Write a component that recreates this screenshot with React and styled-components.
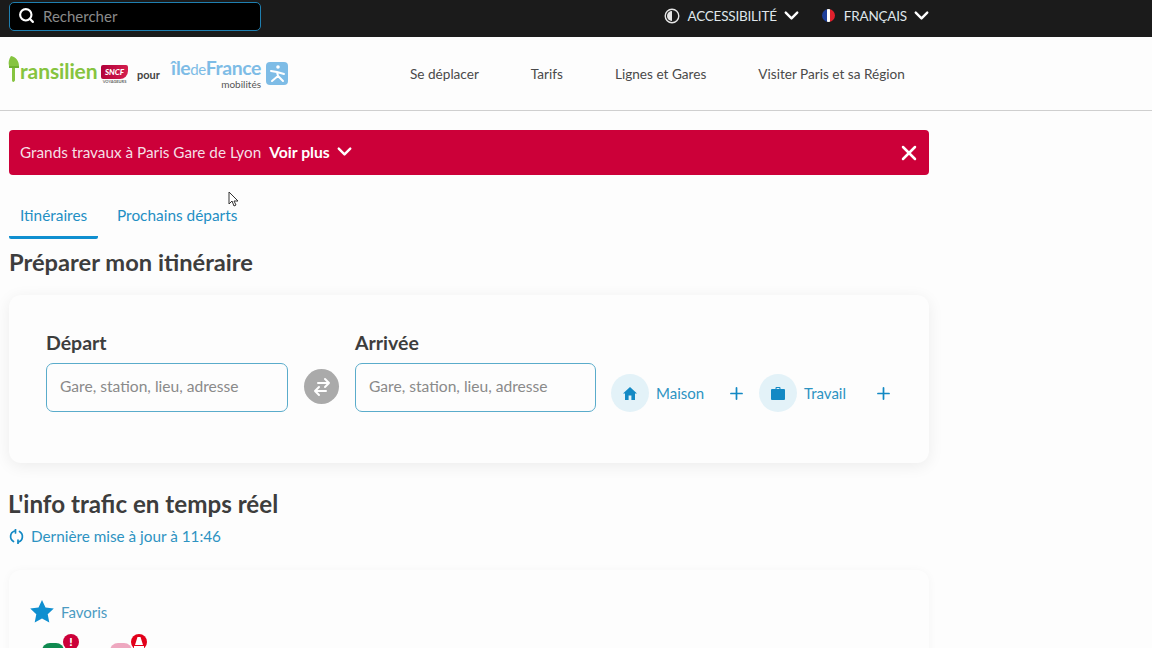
import styled, { createGlobalStyle } from "styled-components";
import { ChevronDown, X, Plus, Search, RefreshCw } from "lucide-react";

const Global = createGlobalStyle`
  html, body {
    margin: 0;
    height: 648px;
    overflow: hidden;
    background: #fdfdfd;
    font-family: Lato, "Open Sans", sans-serif;
  }
  * { box-sizing: border-box; }
`;

const Page = styled.div`
  position: relative;
  width: 1152px;
  height: 648px;
  overflow: hidden;
`;

const TopBar = styled.div`
  height: 37px;
  background: #1b1b1b;
  display: flex;
  align-items: flex-start;
  justify-content: space-between;
  padding: 2px 219px 0 9px;
`;

const SearchBox = styled.div`
  width: 252px;
  height: 29px;
  background: #000;
  border: 1px solid #1f7fb0;
  border-radius: 5px;
  display: flex;
  align-items: center;
  gap: 8px;
  padding: 0 0 2px 8px;
  color: #fff;
`;

const SearchText = styled.span`
  font-size: 15px;
  color: #8a8a8a;
`;

const TopMenu = styled.div`
  display: flex;
  align-items: center;
  height: 27px;
  gap: 19px;
`;

const TopItem = styled.div`
  display: flex;
  align-items: center;
  gap: 7px;
  color: #dfe6ea;
  font-size: 13.5px;
  letter-spacing: -0.2px;
`;

const TopChevron = styled.span`
  display: flex;
  margin-left: -4px;
  color: #fff;
`;

const Flag = styled.span`
  width: 13px;
  height: 13px;
  border-radius: 50%;
  margin-right: 2px;
  background: linear-gradient(90deg, #1d3f9a 0 35%, #fff 35% 65%, #e0202c 65%);
`;

const Header = styled.header`
  height: 74px;
  border-bottom: 1px solid #cfcfcf;
  display: flex;
  align-items: center;
  padding-left: 8px;
`;

const Logos = styled.div`
  width: 402px;
  flex: none;
  display: flex;
  align-items: center;
  height: 40px;
`;

const TransilienLogo = styled.div`
  width: 81px;
  color: #86c440;
  font-size: 21px;
  font-weight: 700;
  letter-spacing: -0.1px;
  margin-top: -6px;
`;

const SncfColumn = styled.div`
  width: 27px;
  display: flex;
  flex-direction: column;
  align-items: center;
  margin-top: 1px;
`;

const SncfMark = styled.div`
  width: 27px;
  height: 14px;
  background: linear-gradient(100deg, #b0003a, #d6204f);
  border-radius: 2px 2px 8px 2px;
  color: #fff;
  font-size: 8px;
  font-weight: 900;
  font-style: italic;
  text-align: center;
  line-height: 14px;
`;

const SncfSub = styled.div`
  font-size: 4px;
  color: #666;
  font-weight: 700;
  line-height: 5px;
`;

const Pour = styled.span`
  margin-left: 9px;
  width: 34px;
  font-size: 11px;
  font-weight: 700;
  color: #444;
  margin-top: 2px;
`;

const IdfColumn = styled.div`
  display: flex;
  flex-direction: column;
  align-items: flex-end;
  width: 90px;
`;

const IdfName = styled.div`
  font-size: 19.4px;
  font-weight: 700;
  color: #7ebce6;
  letter-spacing: -0.4px;
  line-height: 18px;
  white-space: nowrap;
`;

const IdfDe = styled.span`
  font-weight: 400;
  font-size: 15px;
`;

const IdfSub = styled.div`
  font-size: 10px;
  color: #555;
  line-height: 10px;
  margin-top: 1px;
`;

const IdfBadge = styled.div`
  width: 22px;
  height: 23px;
  margin-left: 5px;
  background: #7ebce6;
  border-radius: 4px;
  display: flex;
  align-items: center;
  justify-content: center;
`;

const Nav = styled.nav`
  display: flex;
  gap: 52px;
  font-size: 13.6px;
  color: #4a4a4a;
`;

const Main = styled.main`
  width: 929px;
  padding: 19px 0 0 9px;
`;

const Alert = styled.div`
  height: 45px;
  background: #cc0039;
  border-radius: 4px;
  display: flex;
  align-items: center;
  padding: 0 8px 2px 11px;
  color: #fff;
  font-size: 15.3px;
`;

const AlertText = styled.span`
  color: #f5dfe5;
`;

const AlertMore = styled.b`
  margin-left: 8px;
  font-size: 15.7px;
  font-weight: 700;
`;

const AlertChevron = styled.span`
  display: flex;
  margin-left: 3px;
`;

const AlertClose = styled.span`
  display: flex;
  margin: 2px 0 0 auto;
`;

const Tabs = styled.div`
  display: flex;
  margin-top: 26px;
  height: 38px;
`;

const Tab = styled.div`
  width: ${(p) => p.$width}px;
  padding-left: ${(p) => p.$pad}px;
  font-size: 15.4px;
  color: #1f8fc4;
  line-height: 29px;
  height: 38px;
  border-bottom: ${(p) => (p.$active ? "3px solid #0f8fd0" : "none")};
  border-radius: 0 0 2px 2px;
`;

const Title = styled.h2`
  margin: 9px 0 0;
  font-size: 23.7px;
  font-weight: 700;
  color: #3d3d3d;
  line-height: 28px;
`;

const PlanCard = styled.section`
  margin-top: 19px;
  height: 168px;
  background: #fdfdfd;
  border-radius: 12px;
  box-shadow: 0 3px 16px rgba(0, 0, 0, 0.07);
  display: flex;
  align-items: flex-start;
  padding: 36px 0 0 37px;
`;

const Field = styled.div`
  width: ${(p) => p.$width}px;
`;

const Label = styled.div`
  font-size: 19.5px;
  font-weight: 700;
  color: #3d3d3d;
  line-height: 24px;
  margin-bottom: 8px;
`;

const InputBox = styled.div`
  height: 49px;
  border: 1px solid #5aaccb;
  border-radius: 7px;
  padding: 0 0 3px 13px;
  display: flex;
  align-items: center;
  font-size: 15.6px;
  color: #8a8a8a;
`;

const SwapButton = styled.div`
  width: 35px;
  height: 35px;
  margin: 38px 16px 0 16px;
  border-radius: 50%;
  background: #aaa;
  display: flex;
  align-items: center;
  justify-content: center;
`;

const Shortcuts = styled.div`
  display: flex;
  align-items: center;
  margin: 43px 0 0 15px;
`;

const ShortcutIcon = styled.div`
  width: 38px;
  height: 38px;
  border-radius: 50%;
  background: #e3f2f8;
  display: flex;
  align-items: center;
  justify-content: center;
`;

const ShortcutLabel = styled.span`
  width: ${(p) => p.$width}px;
  padding-left: 7px;
  font-size: 15px;
  color: #2d93c2;
`;

const ShortcutPlus = styled.span`
  display: flex;
  width: ${(p) => p.$width}px;
  color: #1389c4;
`;

const TrafficTitle = styled(Title)`
  margin: 27px 0 0 -1px;
  font-size: 24.2px;
`;

const Updated = styled.div`
  display: flex;
  align-items: center;
  gap: 7px;
  margin-top: 8px;
  font-size: 15.3px;
  color: #2d93c2;
  line-height: 20px;
`;

const FavCard = styled.section`
  margin-top: 24px;
  height: 200px;
  border-radius: 12px;
  box-shadow: 0 1px 10px rgba(0, 0, 0, 0.04);
  padding: 30px 0 0 21px;
`;

const FavHead = styled.div`
  display: flex;
  align-items: center;
  gap: 7px;
  font-size: 15px;
  color: #4b9bc2;
`;

const Lines = styled.div`
  display: flex;
  gap: 46px;
  margin: 20px 0 0 12px;
`;

const LineBadge = styled.div`
  position: relative;
  width: 22px;
  height: 22px;
  border-radius: 8px;
  background: ${(p) => p.$color};
`;

const AlertDot = styled.span`
  position: absolute;
  top: -9px;
  left: 21px;
  width: 16px;
  height: 16px;
  border-radius: 50%;
  background: ${(p) => p.$color};
  color: #fff;
  font-size: 12px;
  font-weight: 900;
  line-height: 16px;
  text-align: center;
  display: flex;
  align-items: center;
  justify-content: center;
`;

const Cursor = styled.svg`
  position: absolute;
  left: 228px;
  top: 191px;
`;

function App() {
  return (
    <Page>
      <Global />
      <TopBar>
        <SearchBox>
          <Search size={17} strokeWidth={3} />
          <SearchText>Rechercher</SearchText>
        </SearchBox>
        <TopMenu>
          <TopItem>
            <svg width="16" height="16" viewBox="0 0 16 16">
              <circle cx="8" cy="8" r="6.8" fill="none" stroke="#e6e6e6" strokeWidth="1.4" />
              <path d="M8 3a5 5 0 0 0 0 10z" fill="#e6e6e6" />
            </svg>
            ACCESSIBILITÉ
            <TopChevron>
              <ChevronDown size={23} strokeWidth={2.5} />
            </TopChevron>
          </TopItem>
          <TopItem>
            <Flag />
            FRANÇAIS
            <TopChevron>
              <ChevronDown size={23} strokeWidth={2.5} />
            </TopChevron>
          </TopItem>
        </TopMenu>
      </TopBar>
      <Header>
        <Logos>
          <svg width="12" height="27" viewBox="0 0 12 27" style={{ marginTop: -9 }}>
            <path d="M3 0c5 1 8 5 8 10H7v14c0 2-3 3-3 0V10H1C0 6 1 3 3 0z" fill="#86c440" />
            <path d="M1 10h10v2H1z" fill="#6fb02f" />
          </svg>
          <TransilienLogo>ransilien</TransilienLogo>
          <SncfColumn>
            <SncfMark>SNCF</SncfMark>
            <SncfSub>VOYAGEURS</SncfSub>
          </SncfColumn>
          <Pour>pour</Pour>
          <IdfColumn>
            <IdfName>
              île<IdfDe>de</IdfDe>France
            </IdfName>
            <IdfSub>mobilités</IdfSub>
          </IdfColumn>
          <IdfBadge>
            <svg width="17" height="19" viewBox="0 0 17 19" fill="none" stroke="#fff" strokeWidth="2" strokeLinecap="round">
              <circle cx="9" cy="3" r="1.8" fill="#fff" stroke="none" />
              <path d="M2 7l6 1 7 2M8 8l1 4-6 5M9 12l5 5" />
            </svg>
          </IdfBadge>
        </Logos>
        <Nav>
          <span>Se déplacer</span>
          <span>Tarifs</span>
          <span>Lignes et Gares</span>
          <span>Visiter Paris et sa Région</span>
        </Nav>
      </Header>
      <Main>
        <Alert>
          <AlertText>Grands travaux à Paris Gare de Lyon</AlertText>
          <AlertMore>Voir plus</AlertMore>
          <AlertChevron>
            <ChevronDown size={23} strokeWidth={2.5} />
          </AlertChevron>
          <AlertClose>
            <X size={24} strokeWidth={2.5} />
          </AlertClose>
        </Alert>
        <Tabs>
          <Tab $active $width={89} $pad={11}>Itinéraires</Tab>
          <Tab $width={160} $pad={19}>Prochains départs</Tab>
        </Tabs>
        <Title>Préparer mon itinéraire</Title>
        <PlanCard>
          <Field $width={242}>
            <Label>Départ</Label>
            <InputBox>Gare, station, lieu, adresse</InputBox>
          </Field>
          <SwapButton>
            <svg width="22" height="22" viewBox="0 0 22 22" fill="none" stroke="#fff" strokeWidth="2" strokeLinecap="round" strokeLinejoin="round">
              <path d="M7 7h11M14 3l4 4-4 4" />
              <path d="M15 15H4M8 11l-4 4 4 4" />
            </svg>
          </SwapButton>
          <Field $width={241}>
            <Label>Arrivée</Label>
            <InputBox>Gare, station, lieu, adresse</InputBox>
          </Field>
          <Shortcuts>
            <ShortcutIcon>
              <svg width="14" height="13" viewBox="0 0 14 13" fill="#1389c4">
                <path d="M7 0L0 6.500h2V13h3.600V8.600h2.800V13H12V6.500h2z" />
              </svg>
            </ShortcutIcon>
            <ShortcutLabel $width={78}>Maison</ShortcutLabel>
            <ShortcutPlus $width={32}>
              <Plus size={19} strokeWidth={2.2} />
            </ShortcutPlus>
            <ShortcutIcon>
              <svg width="14" height="13" viewBox="0 0 14 13" fill="#1389c4">
                <path d="M4.500 2V1a1 1 0 0 1 1-1h3a1 1 0 0 1 1 1v1H13a1 1 0 0 1 1 1v9a1 1 0 0 1-1 1H1a1 1 0 0 1-1-1V3a1 1 0 0 1 1-1zM5.600 2h2.800V1.100H5.600z" />
              </svg>
            </ShortcutIcon>
            <ShortcutLabel $width={77}>Travail</ShortcutLabel>
            <ShortcutPlus $width={20}>
              <Plus size={19} strokeWidth={2.2} />
            </ShortcutPlus>
          </Shortcuts>
        </PlanCard>
        <TrafficTitle>L'info trafic en temps réel</TrafficTitle>
        <Updated>
          <svg width="15" height="15" viewBox="0 0 15 15" fill="none" stroke="#1389c4" strokeWidth="1.7" strokeLinecap="round" strokeLinejoin="round">
            <path d="M4.500 12.500A5.800 5.800 0 0 1 5.500 2M10.500 2.500a5.800 5.800 0 0 1-1 10.500" />
            <path d="M6.500 0v4M9 11v4" />
          </svg>
          Dernière mise à jour à 11:46
        </Updated>
        <FavCard>
          <FavHead>
            <svg width="24" height="23" viewBox="0 0 24 23" fill="#0f8fd0">
              <path d="M12 0l3.500 7.600 8.300 1-6.100 5.700 1.600 8.200L12 18.400 4.700 22.500l1.600-8.200L.2 8.600l8.300-1z" />
            </svg>
            Favoris
          </FavHead>
          <Lines>
            <LineBadge $color="#0f8a50">
              <AlertDot $color="#cc0039">!</AlertDot>
            </LineBadge>
            <LineBadge $color="#eea8c0">
              <AlertDot $color="#e2001a">
                <svg width="10" height="11" viewBox="0 0 10 11" fill="#fff">
                  <path d="M3.500 0h3L9 8H1zM0 9h10v2H0z" />
                </svg>
              </AlertDot>
            </LineBadge>
          </Lines>
        </FavCard>
      </Main>
      <Cursor width="12" height="17" viewBox="0 0 12 17">
        <path d="M1 1v12l3-3 2 5 2-1-2-4h4z" fill="#fff" stroke="#333" strokeWidth="1" />
      </Cursor>
    </Page>
  );
}

export default App;
